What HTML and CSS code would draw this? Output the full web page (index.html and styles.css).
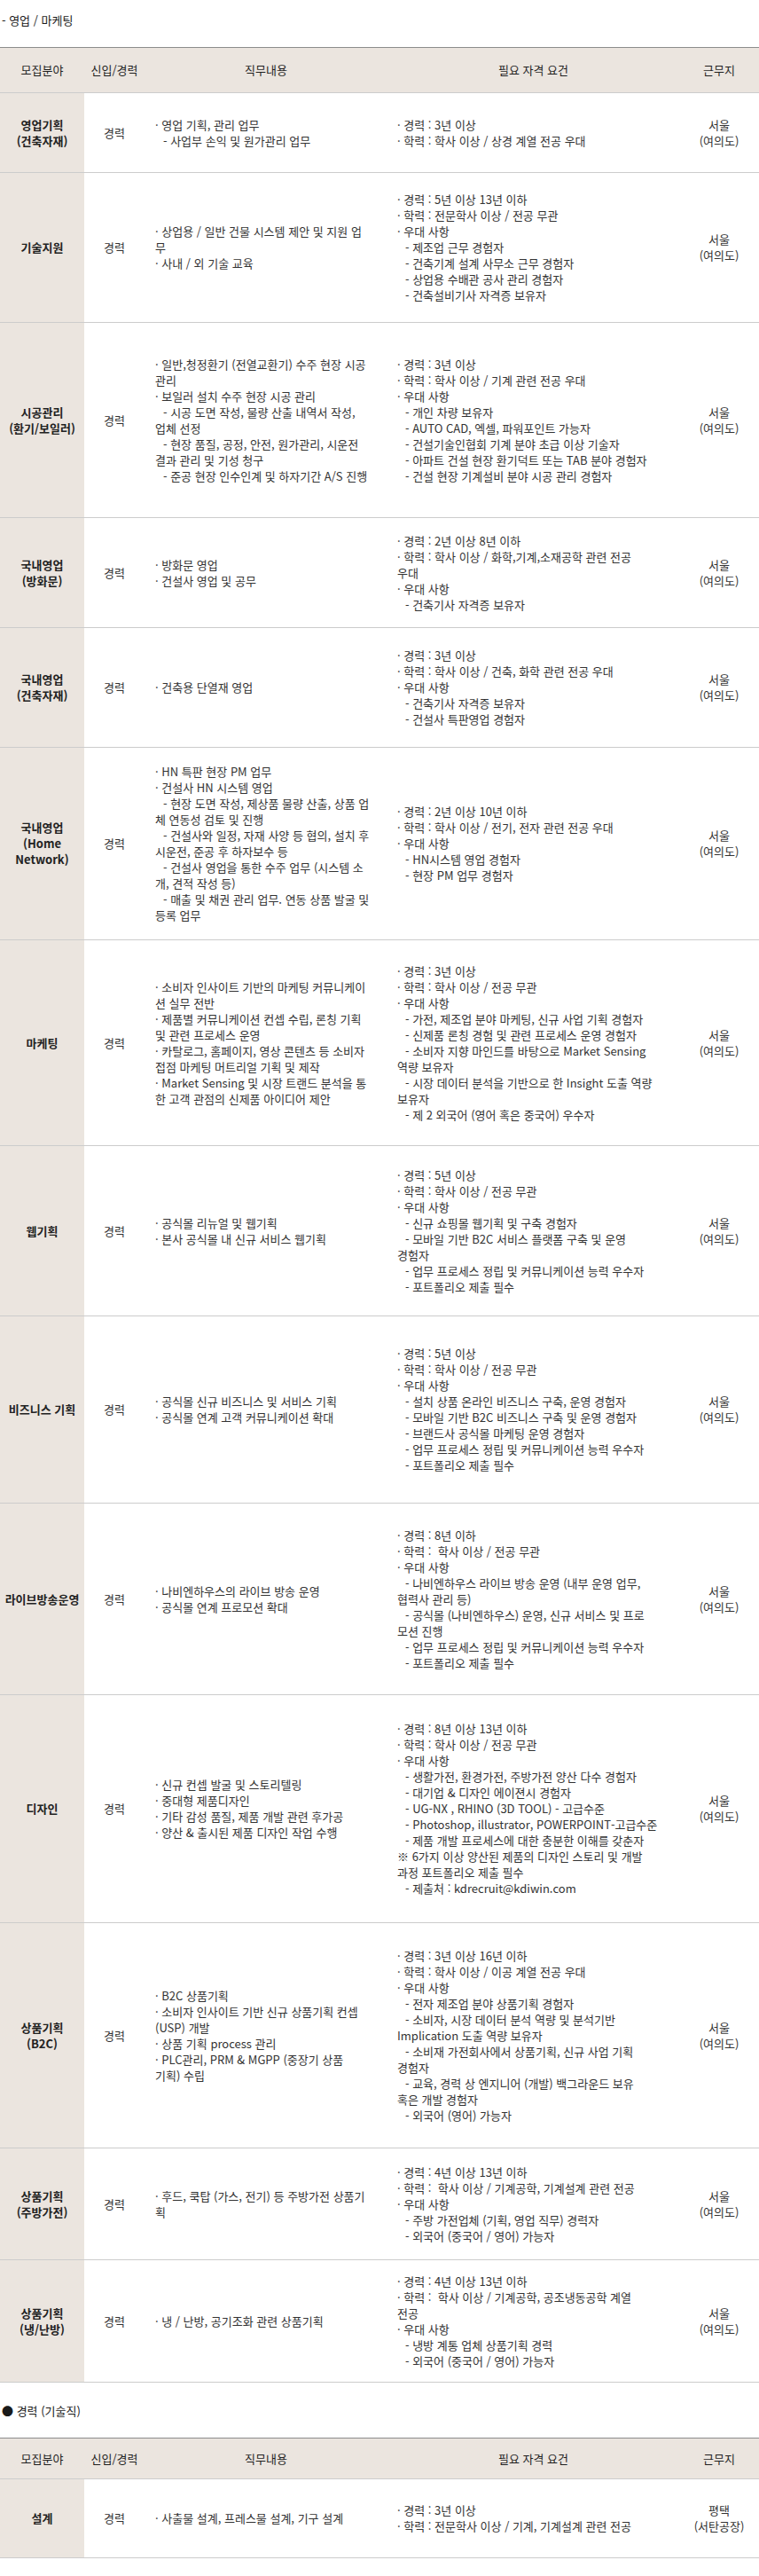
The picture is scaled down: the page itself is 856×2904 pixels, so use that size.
FILE: index.html
```html
<!DOCTYPE html>
<html lang="ko">
<head>
<meta charset="utf-8">
<title>모집요강</title>
<link rel="stylesheet" href="styles.css">
</head>
<body>
<p class="section-title first">- 영업 / 마케팅</p>
<div class="jobs">
  <div class="row head head-tall">
    <div class="cell">모집분야</div>
    <div class="cell">신입/경력</div>
    <div class="cell">직무내용</div>
    <div class="cell">필요 자격 요건</div>
    <div class="cell">근무지</div>
  </div>

  <div class="row h90">
    <div class="cell field"><div>영업기획</div><div>(건축자재)</div></div>
    <div class="cell type">경력</div>
    <div class="cell duty">
      <div class="ln">· 영업 기획, 관리 업무</div>
      <div class="ln sub">- 사업부 손익 및 원가관리 업무</div>
    </div>
    <div class="cell req">
      <div class="ln">· 경력 : 3년 이상</div>
      <div class="ln">· 학력 : 학사 이상 / 상경 계열 전공 우대</div>
    </div>
    <div class="cell place"><div>서울</div><div>(여의도)</div></div>
  </div>

  <div class="row h169">
    <div class="cell field"><div>기술지원</div></div>
    <div class="cell type">경력</div>
    <div class="cell duty">
      <div class="ln">· 상업용 / 일반 건물 시스템 제안 및 지원 업</div>
      <div class="ln">무</div>
      <div class="ln">· 사내 / 외 기술 교육</div>
    </div>
    <div class="cell req">
      <div class="ln">· 경력 : 5년 이상 13년 이하</div>
      <div class="ln">· 학력 : 전문학사 이상 / 전공 무관</div>
      <div class="ln">· 우대 사항</div>
      <div class="ln sub">- 제조업 근무 경험자</div>
      <div class="ln sub">- 건축기계 설계 사무소 근무 경험자</div>
      <div class="ln sub">- 상업용 수배관 공사 관리 경험자</div>
      <div class="ln sub">- 건축설비기사 자격증 보유자</div>
    </div>
    <div class="cell place"><div>서울</div><div>(여의도)</div></div>
  </div>

  <div class="row h220">
    <div class="cell field"><div>시공관리</div><div>(환기/보일러)</div></div>
    <div class="cell type">경력</div>
    <div class="cell duty">
      <div class="ln">· 일반,청정환기 (전열교환기) 수주 현장 시공</div>
      <div class="ln">관리</div>
      <div class="ln">· 보일러 설치 수주 현장 시공 관리</div>
      <div class="ln sub">- 시공 도면 작성, 물량 산출 내역서 작성,</div>
      <div class="ln">업체 선정</div>
      <div class="ln sub">- 현장 품질, 공정, 안전, 원가관리, 시운전</div>
      <div class="ln">결과 관리 및 기성 청구</div>
      <div class="ln sub">- 준공 현장 인수인계 및 하자기간 A/S 진행</div>
    </div>
    <div class="cell req">
      <div class="ln">· 경력 : 3년 이상</div>
      <div class="ln">· 학력 : 학사 이상 / 기계 관련 전공 우대</div>
      <div class="ln">· 우대 사항</div>
      <div class="ln sub">- 개인 차량 보유자</div>
      <div class="ln sub">- AUTO CAD, 엑셀, 파워포인트 가능자</div>
      <div class="ln sub">- 건설기술인협회 기계 분야 초급 이상 기술자</div>
      <div class="ln sub">- 아파트 건설 현장 환기덕트 또는 TAB 분야 경험자</div>
      <div class="ln sub">- 건설 현장 기계설비 분야 시공 관리 경험자</div>
    </div>
    <div class="cell place"><div>서울</div><div>(여의도)</div></div>
  </div>

  <div class="row h124">
    <div class="cell field"><div>국내영업</div><div>(방화문)</div></div>
    <div class="cell type">경력</div>
    <div class="cell duty">
      <div class="ln">· 방화문 영업</div>
      <div class="ln">· 건설사 영업 및 공무</div>
    </div>
    <div class="cell req">
      <div class="ln">· 경력 : 2년 이상 8년 이하</div>
      <div class="ln">· 학력 : 학사 이상 / 화학,기계,소재공학 관련 전공</div>
      <div class="ln">우대</div>
      <div class="ln">· 우대 사항</div>
      <div class="ln sub">- 건축기사 자격증 보유자</div>
    </div>
    <div class="cell place"><div>서울</div><div>(여의도)</div></div>
  </div>

  <div class="row h135">
    <div class="cell field"><div>국내영업</div><div>(건축자재)</div></div>
    <div class="cell type">경력</div>
    <div class="cell duty">
      <div class="ln">· 건축용 단열재 영업</div>
    </div>
    <div class="cell req">
      <div class="ln">· 경력 : 3년 이상</div>
      <div class="ln">· 학력 : 학사 이상 / 건축, 화학 관련 전공 우대</div>
      <div class="ln">· 우대 사항</div>
      <div class="ln sub">- 건축기사 자격증 보유자</div>
      <div class="ln sub">- 건설사 특판영업 경험자</div>
    </div>
    <div class="cell place"><div>서울</div><div>(여의도)</div></div>
  </div>

  <div class="row h217">
    <div class="cell field"><div>국내영업</div><div>(Home</div><div>Network)</div></div>
    <div class="cell type">경력</div>
    <div class="cell duty">
      <div class="ln">· HN 특판 현장 PM 업무</div>
      <div class="ln">· 건설사 HN 시스템 영업</div>
      <div class="ln sub">- 현장 도면 작성, 제상품 물량 산출, 상품 업</div>
      <div class="ln">체 연동성 검토 및 진행</div>
      <div class="ln sub">- 건설사와 일정, 자재 사양 등 협의, 설치 후</div>
      <div class="ln">시운전, 준공 후 하자보수 등</div>
      <div class="ln sub">- 건설사 영업을 통한 수주 업무 (시스템 소</div>
      <div class="ln">개, 견적 작성 등)</div>
      <div class="ln sub">- 매출 및 채권 관리 업무. 연동 상품 발굴 및</div>
      <div class="ln">등록 업무</div>
    </div>
    <div class="cell req">
      <div class="ln">· 경력 : 2년 이상 10년 이하</div>
      <div class="ln">· 학력 : 학사 이상 / 전기, 전자 관련 전공 우대</div>
      <div class="ln">· 우대 사항</div>
      <div class="ln sub">- HN시스템 영업 경험자</div>
      <div class="ln sub">- 현장 PM 업무 경험자</div>
    </div>
    <div class="cell place"><div>서울</div><div>(여의도)</div></div>
  </div>

  <div class="row h232">
    <div class="cell field"><div>마케팅</div></div>
    <div class="cell type">경력</div>
    <div class="cell duty">
      <div class="ln">· 소비자 인사이트 기반의 마케팅 커뮤니케이</div>
      <div class="ln">션 실무 전반</div>
      <div class="ln">· 제품별 커뮤니케이션 컨셉 수립, 론칭 기획</div>
      <div class="ln">및 관련 프로세스 운영</div>
      <div class="ln">· 카탈로그, 홈페이지, 영상 콘텐츠 등 소비자</div>
      <div class="ln">접점 마케팅 머트리얼 기획 및 제작</div>
      <div class="ln">· Market Sensing 및 시장 트랜드 분석을 통</div>
      <div class="ln">한 고객 관점의 신제품 아이디어 제안</div>
    </div>
    <div class="cell req">
      <div class="ln">· 경력 : 3년 이상</div>
      <div class="ln">· 학력 : 학사 이상 / 전공 무관</div>
      <div class="ln">· 우대 사항</div>
      <div class="ln sub">- 가전, 제조업 분야 마케팅, 신규 사업 기획 경험자</div>
      <div class="ln sub">- 신제품 론칭 경험 및 관련 프로세스 운영 경험자</div>
      <div class="ln sub">- 소비자 지향 마인드를 바탕으로 Market Sensing</div>
      <div class="ln">역량 보유자</div>
      <div class="ln sub">- 시장 데이터 분석을 기반으로 한 Insight 도출 역량</div>
      <div class="ln">보유자</div>
      <div class="ln sub">- 제 2 외국어 (영어 혹은 중국어) 우수자</div>
    </div>
    <div class="cell place"><div>서울</div><div>(여의도)</div></div>
  </div>

  <div class="row h192">
    <div class="cell field"><div>웹기획</div></div>
    <div class="cell type">경력</div>
    <div class="cell duty">
      <div class="ln">· 공식몰 리뉴얼 및 웹기획</div>
      <div class="ln">· 본사 공식몰 내 신규 서비스 웹기획</div>
    </div>
    <div class="cell req">
      <div class="ln">· 경력 : 5년 이상</div>
      <div class="ln">· 학력 : 학사 이상 / 전공 무관</div>
      <div class="ln">· 우대 사항</div>
      <div class="ln sub">- 신규 쇼핑몰 웹기획 및 구축 경험자</div>
      <div class="ln sub">- 모바일 기반 B2C 서비스 플랫폼 구축 및 운영</div>
      <div class="ln">경험자</div>
      <div class="ln sub">- 업무 프로세스 정립 및 커뮤니케이션 능력 우수자</div>
      <div class="ln sub">- 포트폴리오 제출 필수</div>
    </div>
    <div class="cell place"><div>서울</div><div>(여의도)</div></div>
  </div>

  <div class="row h211">
    <div class="cell field"><div>비즈니스 기획</div></div>
    <div class="cell type">경력</div>
    <div class="cell duty">
      <div class="ln">· 공식몰 신규 비즈니스 및 서비스 기획</div>
      <div class="ln">· 공식몰 연계 고객 커뮤니케이션 확대</div>
    </div>
    <div class="cell req">
      <div class="ln">· 경력 : 5년 이상</div>
      <div class="ln">· 학력 : 학사 이상 / 전공 무관</div>
      <div class="ln">· 우대 사항</div>
      <div class="ln sub">- 설치 상품 온라인 비즈니스 구축, 운영 경험자</div>
      <div class="ln sub">- 모바일 기반 B2C 비즈니스 구축 및 운영 경험자</div>
      <div class="ln sub">- 브랜드사 공식몰 마케팅 운영 경험자</div>
      <div class="ln sub">- 업무 프로세스 정립 및 커뮤니케이션 능력 우수자</div>
      <div class="ln sub">- 포트폴리오 제출 필수</div>
    </div>
    <div class="cell place"><div>서울</div><div>(여의도)</div></div>
  </div>

  <div class="row h216">
    <div class="cell field"><div>라이브방송운영</div></div>
    <div class="cell type">경력</div>
    <div class="cell duty">
      <div class="ln">· 나비엔하우스의 라이브 방송 운영</div>
      <div class="ln">· 공식몰 연계 프로모션 확대</div>
    </div>
    <div class="cell req">
      <div class="ln">· 경력 : 8년 이하</div>
      <div class="ln">· 학력 :&nbsp; 학사 이상 / 전공 무관</div>
      <div class="ln">· 우대 사항</div>
      <div class="ln sub">- 나비엔하우스 라이브 방송 운영 (내부 운영 업무,</div>
      <div class="ln">협력사 관리 등)</div>
      <div class="ln sub">- 공식몰 (나비엔하우스) 운영, 신규 서비스 및 프로</div>
      <div class="ln">모션 진행</div>
      <div class="ln sub">- 업무 프로세스 정립 및 커뮤니케이션 능력 우수자</div>
      <div class="ln sub">- 포트폴리오 제출 필수</div>
    </div>
    <div class="cell place"><div>서울</div><div>(여의도)</div></div>
  </div>

  <div class="row h257">
    <div class="cell field"><div>디자인</div></div>
    <div class="cell type">경력</div>
    <div class="cell duty">
      <div class="ln">· 신규 컨셉 발굴 및 스토리텔링</div>
      <div class="ln">· 중대형 제품디자인</div>
      <div class="ln">· 기타 감성 품질, 제품 개발 관련 후가공</div>
      <div class="ln">· 양산 &amp; 출시된 제품 디자인 작업 수행</div>
    </div>
    <div class="cell req">
      <div class="ln">· 경력 : 8년 이상 13년 이하</div>
      <div class="ln">· 학력 : 학사 이상 / 전공 무관</div>
      <div class="ln">· 우대 사항</div>
      <div class="ln sub">- 생활가전, 환경가전, 주방가전 양산 다수 경험자</div>
      <div class="ln sub">- 대기업 &amp; 디자인 에이젼시 경험자</div>
      <div class="ln sub">- UG-NX , RHINO (3D TOOL) - 고급수준</div>
      <div class="ln sub">- Photoshop, illustrator, POWERPOINT-고급수준</div>
      <div class="ln sub">- 제품 개발 프로세스에 대한 충분한 이해를 갖춘자</div>
      <div class="ln">※ 6가지 이상 양산된 제품의 디자인 스토리 및 개발</div>
      <div class="ln">과정 포트폴리오 제출 필수</div>
      <div class="ln sub">- 제출처 : kdrecruit@kdiwin.com</div>
    </div>
    <div class="cell place"><div>서울</div><div>(여의도)</div></div>
  </div>

  <div class="row h254">
    <div class="cell field"><div>상품기획</div><div>(B2C)</div></div>
    <div class="cell type">경력</div>
    <div class="cell duty">
      <div class="ln">· B2C 상품기획</div>
      <div class="ln">· 소비자 인사이트 기반 신규 상품기획 컨셉</div>
      <div class="ln">(USP) 개발</div>
      <div class="ln">· 상품 기획 process 관리</div>
      <div class="ln">· PLC관리, PRM &amp; MGPP (중장기 상품</div>
      <div class="ln">기획) 수립</div>
    </div>
    <div class="cell req">
      <div class="ln">· 경력 : 3년 이상 16년 이하</div>
      <div class="ln">· 학력 : 학사 이상 / 이공 계열 전공 우대</div>
      <div class="ln">· 우대 사항</div>
      <div class="ln sub">- 전자 제조업 분야 상품기획 경험자</div>
      <div class="ln sub">- 소비자, 시장 데이터 분석 역량 및 분석기반</div>
      <div class="ln">Implication 도출 역량 보유자</div>
      <div class="ln sub">- 소비재 가전회사에서 상품기획, 신규 사업 기획</div>
      <div class="ln">경험자</div>
      <div class="ln sub">- 교육, 경력 상 엔지니어 (개발) 백그라운드 보유</div>
      <div class="ln">혹은 개발 경험자</div>
      <div class="ln sub">- 외국어 (영어) 가능자</div>
    </div>
    <div class="cell place"><div>서울</div><div>(여의도)</div></div>
  </div>

  <div class="row h126">
    <div class="cell field"><div>상품기획</div><div>(주방가전)</div></div>
    <div class="cell type">경력</div>
    <div class="cell duty">
      <div class="ln">· 후드, 쿡탑 (가스, 전기) 등 주방가전 상품기</div>
      <div class="ln">획</div>
    </div>
    <div class="cell req">
      <div class="ln">· 경력 : 4년 이상 13년 이하</div>
      <div class="ln">· 학력 :&nbsp; 학사 이상 / 기계공학, 기계설계 관련 전공</div>
      <div class="ln">· 우대 사항</div>
      <div class="ln sub">- 주방 가전업체 (기획, 영업 직무) 경력자</div>
      <div class="ln sub">- 외국어 (중국어 / 영어) 가능자</div>
    </div>
    <div class="cell place"><div>서울</div><div>(여의도)</div></div>
  </div>

  <div class="row h138">
    <div class="cell field"><div>상품기획</div><div>(냉/난방)</div></div>
    <div class="cell type">경력</div>
    <div class="cell duty">
      <div class="ln">· 냉 / 난방, 공기조화 관련 상품기획</div>
    </div>
    <div class="cell req">
      <div class="ln">· 경력 : 4년 이상 13년 이하</div>
      <div class="ln">· 학력 :&nbsp; 학사 이상 / 기계공학, 공조냉동공학 계열</div>
      <div class="ln">전공</div>
      <div class="ln">· 우대 사항</div>
      <div class="ln sub">- 냉방 계통 업체 상품기획 경력</div>
      <div class="ln sub">- 외국어 (중국어 / 영어) 가능자</div>
    </div>
    <div class="cell place"><div>서울</div><div>(여의도)</div></div>
  </div>
</div>

<p class="section-title second">● 경력 (기술직)</p>
<div class="jobs">
  <div class="row head head-short">
    <div class="cell">모집분야</div>
    <div class="cell">신입/경력</div>
    <div class="cell">직무내용</div>
    <div class="cell">필요 자격 요건</div>
    <div class="cell">근무지</div>
  </div>
  <div class="row h89">
    <div class="cell field"><div>설계</div></div>
    <div class="cell type">경력</div>
    <div class="cell duty">
      <div class="ln">· 사출물 설계, 프레스물 설계, 기구 설계</div>
    </div>
    <div class="cell req">
      <div class="ln">· 경력 : 3년 이상</div>
      <div class="ln">· 학력 : 전문학사 이상 / 기계, 기계설계 관련 전공</div>
    </div>
    <div class="cell place"><div>평택</div><div>(서탄공장)</div></div>
  </div>
</div>
</body>
</html>
```

FILE: styles.css
```css
html, body {
  margin: 0;
  padding: 0;
  background: #ffffff;
}

body {
  font-family: "Noto Sans CJK KR", "Noto Sans", sans-serif;
  font-size: 13px;
  line-height: 18px;
  color: #333333;
  width: 856px;
}

.section-title {
  margin: 0;
  padding: 0 0 21px 2px;
  color: #1a1a1a;
  line-height: 18px;
}

.section-title.first {
  padding-top: 14px;
}

.section-title.second {
  margin-top: 23px;
}

.jobs {
  width: 856px;
}

.row {
  display: grid;
  grid-template-columns: 95px 68px 274px 329px 90px;
  box-sizing: border-box;
  border-bottom: 1px solid #cccccc;
}

.cell {
  display: flex;
  flex-direction: column;
  justify-content: center;
  min-width: 0;
}

.head {
  background: #ebe5df;
  border-top: 1px solid #8c8c8c;
  color: #1f1f1f;
}

.head .cell {
  align-items: center;
  text-align: center;
}

.head-tall {
  height: 52px;
}

.head-short {
  height: 47px;
}

.field {
  background: #ebe5df;
  font-weight: bold;
  color: #222222;
  align-items: center;
  text-align: center;
  white-space: nowrap;
}

.type,
.place {
  align-items: center;
  text-align: center;
}

.duty {
  padding-left: 12px;
  align-items: flex-start;
}

.req {
  padding-left: 11px;
  align-items: flex-start;
}

.ln {
  white-space: nowrap;
}

.ln.sub {
  padding-left: 9px;
}

.h89 { height: 89px; }
.h90 { height: 90px; }
.h124 { height: 124px; }
.h126 { height: 126px; }
.h135 { height: 135px; }
.h138 { height: 138px; }
.h169 { height: 169px; }
.h192 { height: 192px; }
.h211 { height: 211px; }
.h216 { height: 216px; }
.h217 { height: 217px; }
.h220 { height: 220px; }
.h232 { height: 232px; }
.h254 { height: 254px; }
.h257 { height: 257px; }
```
